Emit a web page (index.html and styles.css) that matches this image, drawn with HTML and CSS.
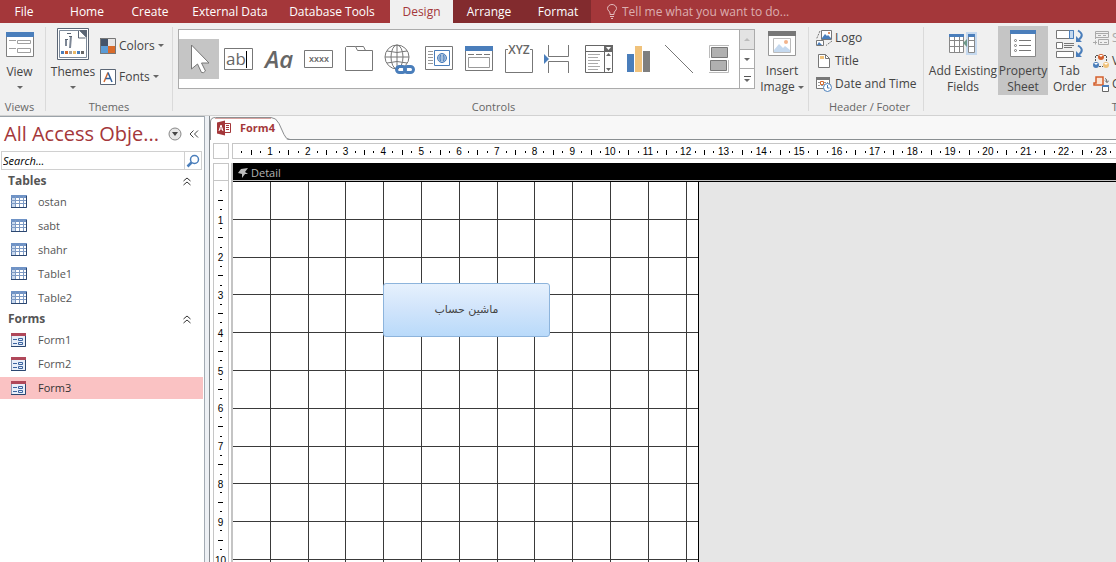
FILE: index.html
```html
<!DOCTYPE html>
<html lang="en">
<head>
  <meta charset="UTF-8" />
  <meta name="viewport" content="width=device-width, initial-scale=1.0"/>
  <title>Access - Form4</title>
  <link rel="stylesheet" href="styles.css">
</head>
<body>

  <!-- Ribbon tabs -->
  <nav class="tabs">
    <button class="tab">File</button>
    <button class="tab">Home</button>
    <button class="tab">Create</button>
    <button class="tab">External Data</button>
    <button class="tab tab-last">Database Tools</button>
    <button class="tab active">Design</button>
    <button class="tab context">Arrange</button>
    <button class="tab context">Format</button>
    <label class="tell-me">
      <svg width="12" height="16" viewBox="0 0 12 16" fill="none" stroke="#e3bdbe"><path d="M4 10.500V9C4 7.500 1.500 6.500 1.500 4.500a4.500 4 0 0 1 9 0c0 2-2.500 3-2.500 4.500v1.500zM4 12.500h4M5 14.500h2"/></svg>
      <input type="text" placeholder="Tell me what you want to do...">
    </label>
  </nav>

  <!-- Ribbon -->
  <div class="ribbon">
    <section class="group group-views">
      <div class="group-body">
        <button class="big">
          <svg width="28" height="32" viewBox="0 0 28 32"><path fill="#fff" stroke="#7f7f7f" d="M.5 4.500h27v24H.5z"/><path fill="#4a7ebb" d="M0 4h28v5H0z"/><path stroke="#a0a0a0" fill="none" d="M3 12.500h7M3 20.500h7M11.500 12.500h13v3h-13zM11.500 20.500h13v4h-13z"/></svg>
          <span>View</span>
          <i class="caret"></i>
        </button>
      </div>
      <h2>Views</h2>
    </section>

    <section class="group group-themes">
      <div class="group-body">
        <button class="big">
          <svg width="32" height="32" viewBox="0 0 32 32"><path fill="#fff" stroke="#5b6675" d="M.5.500h31v31H.5z"/><path fill="#fff" stroke="#7d8a9a" d="M2.500 2.500h20l7 7v20h-27z"/><path fill="#5b6675" d="M22 2h8v8z"/><path fill="#fff" stroke="#5b6675" d="M21.500 3v7h7"/><path stroke="#7d8796" stroke-width="2" fill="none" d="M9 12v6M14 8l-1 12"/><path stroke="#5b6675" fill="none" d="M10 5.500h4M8 11.500h3M12 8.500h3"/><path fill="#4a7ebb" d="M4 23h3v3H4z"/><path fill="#d36a30" d="M8 23h3v3H8z"/><path fill="#a0a0a0" d="M12 23h3v3h-3z"/><path fill="#eab967" d="M16 23h3v3h-3z"/><path fill="#4a7ebb" d="M20 23h3v3h-3z"/><path fill="#666" d="M24 23h3v3h-3z"/></svg>
          <span>Themes</span>
          <i class="caret"></i>
        </button>
        <div class="stack themes-stack">
          <button class="small">
            <svg width="16" height="16" viewBox="0 0 16 16"><path fill="#44546a" d="M0 0h8v8H0z"/><path fill="#e7e6e6" d="M8 0h8v8H8z"/><path fill="#5b9bd5" d="M0 8h8v8H0z"/><path fill="#d96b2b" d="M8 8h8v8H8z"/><path fill="none" stroke="#777" d="M.5.500h15v15H.5z"/></svg>
            Colors <i class="caret"></i>
          </button>
          <button class="small">
            <svg width="16" height="16" viewBox="0 0 16 16"><path fill="#fff" stroke="#5b6675" d="M.5.500h15v15H.5z"/><path fill="none" stroke="#d36a30" stroke-width="1.500" d="M4 13 8 3.500"/><path fill="none" stroke="#31609b" stroke-width="1.500" d="m8 3.500 4 9.500M5.500 9.500h5"/></svg>
            Fonts <i class="caret"></i>
          </button>
        </div>
      </div>
      <h2>Themes</h2>
    </section>

    <section class="group group-controls">
      <div class="gallery">
        <div class="gallery-items">
          <button class="selected" aria-label="Select"><svg viewBox="0 0 40 40"><path fill="#fff" stroke="#777" d="M12.500 6v24l6-5 4 8.500q2 1 4-1.500l-4-8h7.500z"/></svg></button>
          <button aria-label="Text Box"><svg viewBox="0 0 40 40"><path fill="#fff" stroke="#777" d="M5.500 9.500h28v21h-28z"/><text class="glyph-ab" x="7" y="26">ab</text><path stroke="#000" d="M27.500 12v17"/></svg></button>
          <button aria-label="Label"><svg viewBox="0 0 40 40"><text class="glyph-aa" x="6" y="29">Aa</text></svg></button>
          <button aria-label="Button"><svg viewBox="0 0 40 40"><path fill="#fff" stroke="#777" d="M5.500 11.500h28v17h-28z"/><text class="glyph-x" x="20" y="23">xxxx</text></svg></button>
          <button aria-label="Tab Control"><svg viewBox="0 0 40 40"><path fill="#fff" stroke="#777" d="M6.500 31.500v-23l1-1h9l2 4h15v20zM16.500 7.500h8l2 4"/></svg></button>
          <button aria-label="Link"><svg viewBox="0 0 40 40" fill="none" stroke="#777"><circle cx="18" cy="18" r="12"/><ellipse cx="18" cy="18" rx="6" ry="12"/><path d="M18 6v24M6 18h24M8 12q10 3 20 0M8 24q10-3 20 0"/><path stroke="#fff" stroke-width="6" d="M20 31h12"/><g stroke="#4a7ebb" stroke-width="3"><rect x="17.500" y="27.500" width="9" height="6" rx="3"/><rect x="25.500" y="27.500" width="9" height="6" rx="3"/></g></svg></button>
          <button aria-label="Web Browser"><svg viewBox="0 0 40 40" fill="none"><path fill="#fff" stroke="#777" d="M6.500 7.500h27v23h-27z"/><path stroke="#999" d="M9 12.500h5M9 15.500h5M9 18.500h5M9 21.500h5M9 24.500h5"/><g stroke="#4a7ebb"><path d="M15.500 11.500h15v15h-15z"/><circle cx="23" cy="19" r="4.500"/><ellipse cx="23" cy="19" rx="2" ry="4.500"/><path d="M18.500 19h9M19 17h8M19 21h8"/></g></svg></button>
          <button aria-label="Navigation"><svg viewBox="0 0 40 40" fill="none" stroke="#777"><path fill="#fff" d="M6.500 7.500h27v24h-27z"/><path fill="#4a7ebb" stroke="none" d="M6 7h28v5H6z"/><path d="M9 15.500h6M17 15.500h6M25 15.500h6"/><path stroke="#999" d="M9.500 18.500h21v10h-21z"/></svg></button>
          <button aria-label="Option Group"><svg viewBox="0 0 40 40"><path fill="none" stroke="#777" d="M9 10.500H6.500v23h27v-23H31"/><text class="glyph-xyz" x="20" y="15">XYZ</text></svg></button>
          <button aria-label="Page Break"><svg viewBox="0 0 40 40" fill="none" stroke="#777"><path d="M9.500 6v11.500h20V6M9.500 34V22.500h20V34"/><path fill="#4a7ebb" stroke="none" d="m5 15 5 5-5 5z"/></svg></button>
          <button aria-label="Combo Box"><svg viewBox="0 0 40 40"><path fill="#fff" stroke="#666" d="M6.500 6.500h27v27h-27zM6 12.500h28M25.500 12v22"/><path fill="#666" d="M25 6h9v6h-9z"/><path fill="#fff" d="M27 8h5l-2.500 3z"/><path fill="#666" d="M27 17h5l-2.500-3zM27 29h5l-2.500 3z"/><path stroke="#aaa" d="M9 15.500h12M9 18.500h10M9 21.500h12M9 24.500h10M9 27.500h12M9 30.500h10"/></svg></button>
          <button aria-label="Chart"><svg viewBox="0 0 40 40"><path fill="#4a7ebb" d="M8 15h7v18H8z"/><path fill="#f0c27b" d="M16 7h7v26h-7z"/><path fill="#7f7f7f" d="M24 12h7v21h-7z"/></svg></button>
          <button aria-label="Line"><svg viewBox="0 0 40 40"><path stroke="#777" d="m6 6 28 28"/></svg></button>
          <button aria-label="Toggle Button"><svg viewBox="0 0 40 40"><path fill="#b0b0b0" stroke="#777" d="M12.500 8.500h16v10h-16zM11.500 21.500h16v10h-16z"/><path fill="none" stroke="#bbb" d="M10.500 19V6.500H30M10 33.500h19.500V21"/></svg></button>
        </div>
        <div class="gallery-scroll">
          <button class="off" aria-label="Scroll up"><i class="caret up"></i></button>
          <button aria-label="Scroll down"><i class="caret"></i></button>
          <button class="more" aria-label="More"><i class="caret"></i></button>
        </div>
      </div>
      <button class="big image">
        <svg width="28" height="32" viewBox="0 0 28 32"><path fill="#fff" stroke="#999" d="M.5 4.500h27v24H.5z"/><path fill="#777" d="M0 4h28v5H0z"/><path fill="#fff" stroke="#bbb" d="M5.500 11.500h17v14h-17z"/><path fill="#c5d9ef" d="m6 23 5-6 4 4 2-2 5 4v2H6z"/><circle cx="18" cy="15" r="2" fill="#f2b48c"/></svg>
        <span>Insert<br>Image <i class="caret"></i></span>
      </button>
      <h2>Controls</h2>
    </section>

    <section class="group group-header">
      <div class="group-body">
        <div class="stack">
          <button class="small">
            <svg width="16" height="16" viewBox="0 0 16 16"><path fill="#fff" stroke="#777" d="M5.500.500h10v9h-10z"/><path fill="#4a7ebb" d="m6 8 3-4 2 2 1-1 3 3v1H6z"/><circle cx="13" cy="3" r="1" fill="#d36a30"/><path fill="none" stroke="#777" stroke-dasharray="2 1" d="M4 1 .5 9M16 11l-6 4.500"/><path fill="#fff" stroke="#777" d="M.5 10.500h7v5h-7z"/><path fill="#4a7ebb" d="m1 15 2-3 3 3z"/></svg>
            Logo
          </button>
          <button class="small">
            <svg width="16" height="16" viewBox="0 0 16 16"><path fill="#fff" stroke="#777" d="M2.500 1.500h7l4 4v9h-11z"/><path fill="none" stroke="#777" d="M9.500 1.500v4h4"/><path fill="#f0c27b" d="M4 3h4v3H4z"/></svg>
            Title
          </button>
          <button class="small">
            <svg width="16" height="16" viewBox="0 0 16 16"><path fill="#fff" stroke="#777" d="M.5 1.500h13v11H.5z"/><path fill="#777" d="M0 1h14v3H0z"/><path stroke="#999" stroke-dasharray="2 1" d="M2 6.500h10M2 9.500h10"/><path fill="#fff" stroke="#d36a30" d="M4.500 5.500h3v3h-3z"/><circle cx="11.500" cy="11.500" r="4" fill="#fff" stroke="#4a7ebb"/><path fill="none" stroke="#4a7ebb" d="M11.500 9v3h2"/></svg>
            Date and Time
          </button>
        </div>
      </div>
      <h2>Header / Footer</h2>
    </section>

    <section class="group group-tools">
      <div class="group-body">
        <button class="big fields">
          <svg width="28" height="32" viewBox="0 0 28 32"><path fill="#fff" stroke="#888" d="M.5 7.500h14v18H.5zM.5 13.500h14M.5 19.500h14M5.500 7.500v18M10.500 7.500v18"/><path fill="#4a7ebb" d="M0 7h15v3H0z"/><path fill="#c5d9ef" d="M17 5h11v23H17z"/><path fill="#fff" stroke="#888" d="M19.500 7.500h6v18h-6zM19.500 13.500h6M19.500 19.500h6"/><path fill="#4a7ebb" d="M19 7h7v3h-7z"/><path fill="#6f9a8b" d="m18 12-4 4 4 4z"/></svg>
          <span>Add Existing<br>Fields</span>
        </button>
        <button class="big sheet pressed">
          <svg width="26" height="32" viewBox="0 0 26 32"><path fill="#fff" stroke="#888" d="M.5 3.500h25v26H.5z"/><path fill="#4a7ebb" d="M0 3h26v4H0z"/><g fill="#fff" stroke="#777"><circle cx="5.500" cy="13.500" r="1"/><circle cx="5.500" cy="18.500" r="1"/><circle cx="5.500" cy="23.500" r="1"/><path d="M9 13.500h12M9 18.500h12M9 23.500h12"/></g></svg>
          <span>Property<br>Sheet</span>
        </button>
        <button class="big order">
          <svg width="28" height="32" viewBox="0 0 28 32"><path fill="#fff" stroke="#777" d="M.5 3.500h17v8H.5zM.5 15.500h6v6h-6zM.5 24.500h17v6H.5z"/><path fill="#c5d9ef" stroke="#4a7ebb" d="M13.500 3.500h4v8h-4z"/><path stroke="#777" d="M8 16.500h10M8 18.500h10M8 20.500h8"/><path fill="none" stroke="#4a7ebb" stroke-width="2" d="M22 3.500q7 4 1 9M22 18.500q7 4 1 9"/><path fill="#4a7ebb" d="M20 9v6h6zM20 24v6h6z"/></svg>
          <span>Tab<br>Order</span>
        </button>
        <div class="stack">
          <button class="small dim" disabled>
            <svg width="16" height="16" viewBox="0 0 16 16" fill="none" stroke="#aaa"><path d="M2.500 9V1.500h13v6H2M2.500 3.500h13M5 5.500h3M10 5.500h3M5.500 9.500h10v5h-10zM7 12.500h2M11 12.500h3M0 12.500h4M2.500 10.500v4"/></svg>
            Subform in New Window
          </button>
          <button class="small">
            <svg width="16" height="16" viewBox="0 0 16 16"><path fill="none" stroke="#555" stroke-dasharray="2 1" d="M5 2.500H2.500V8M11 2.500h2.500V8M6 13.500h4"/><circle cx="8" cy="4" r="3" fill="#d35f2d"/><circle cx="3" cy="12" r="3" fill="#4a7ebb"/><circle cx="13" cy="12" r="3" fill="#f0c27b"/><path fill="#fff" d="m6 2 2 2 2-2zM1 10l2 2 2-2zM11 10l2 2 2-2z"/></svg>
            View Code
          </button>
          <button class="small">
            <svg width="16" height="16" viewBox="0 0 16 16"><path fill="#fbe5d6" stroke="#d35f2d" stroke-width="1.500" d="M3 1h7v8H1V7h2z"/><path fill="#fff" stroke="#666" d="M9.500 9.500h6v6h-6z"/><path fill="#4a7ebb" d="M9 9h7v2H9z"/><path fill="none" stroke="#666" d="M12 2.500q2 0 2 4M12 4.500l2 2 2-2"/></svg>
            Convert Macros
          </button>
        </div>
      </div>
      <h2>Tools</h2>
    </section>
  </div>

  <div class="workspace">
    <!-- Navigation pane -->
    <aside class="nav-pane">
      <header class="nav-head">
        <h1>All Access Obje...</h1>
        <button aria-label="Object list"><svg width="14" height="14" viewBox="0 0 14 14"><circle cx="7" cy="7" r="6" fill="#e6e6e6" stroke="#888"/><path fill="#444" d="M4 5h6L7 9z"/></svg></button>
        <button aria-label="Collapse pane"><svg width="10" height="10" viewBox="0 0 10 10" fill="none" stroke="#444"><path d="M4.500 1.500 1 5l3.500 3.500M9 1.500 5.500 5 9 8.500"/></svg></button>
      </header>
      <div class="search">
        <input type="text" placeholder="Search..." aria-label="Search">
        <button aria-label="Go"><svg width="14" height="14" viewBox="0 0 14 14" fill="none" stroke="#4a7ebb"><circle cx="8.500" cy="5.500" r="4" stroke-width="1.500"/><path stroke-width="2.500" d="m5.500 8.500-4 4"/></svg></button>
      </div>
      <h3>Tables <svg width="8" height="9" viewBox="0 0 8 9" fill="none" stroke="#333"><path d="M.5 4 4 1l3.500 3M.5 8 4 5l3.500 3"/></svg></h3>
      <ul id="tables"></ul>
      <h3>Forms <svg width="8" height="9" viewBox="0 0 8 9" fill="none" stroke="#333"><path d="M.5 4 4 1l3.500 3M.5 8 4 5l3.500 3"/></svg></h3>
      <ul id="forms"></ul>
    </aside>
    <div class="splitter"></div>

    <!-- Form designer -->
    <main class="designer">
      <div class="doc-tabs">
        <button class="doc-tab">
          <svg class="doc-shape" width="80" height="24" viewBox="0 0 80 24"><path fill="#fff" d="M1 24V6q0-4.500 5-4.500h54q5 0 8 6l5 11q2 5 6 5.500z"/><path fill="none" stroke="#8d8f91" d="M.5 24V6q0-4.500 5-4.500H61q5 0 8 6l5 11q2 5 6 5"/><path fill="none" stroke="#d9a3a0" d="M5 2.500h56"/></svg>
          <svg width="16" height="16" viewBox="0 0 16 16"><path fill="#fff" stroke="#a4373a" d="M8 3.500h6.500v9H8M10 5.500h3M10 7.500h3M10 9.500h3"/><path fill="#a4373a" d="m1 2.500 8-2v15l-8-2z"/><path fill="none" stroke="#fff" d="m3 11 2-6 2 6M3.500 9h3"/></svg>
          <span>Form4</span>
        </button>
      </div>
      <div class="sheet-area">
        <div class="corner"></div>
        <div class="ruler ruler-x" id="rulerX"></div>
        <div class="ruler-side">
          <div class="section-box"></div>
          <div class="ruler ruler-y" id="rulerY"></div>
        </div>
        <div class="canvas">
          <div class="section-bar">
            <svg width="10" height="10" viewBox="0 0 10 10"><path fill="#bbb" d="m0 5 3-4 7-1-3 4 3 2H7l-3 4V6z"/></svg>
            Detail
          </div>
          <div class="form-grid">
            <button class="form-button" lang="fa" dir="rtl">ماشین حساب</button>
          </div>
        </div>
      </div>
    </main>
  </div>

  <script>
    const tableIcon = '<svg width="16" height="14" viewBox="0 0 16 14"><path fill="#fff" stroke="#5d7eae" d="M.5.500h15v12H.5z"/><path fill="#6f93c6" d="M0 0h16v3H0z"/><path fill="#c9d9ee" d="M1 3h3v9H1z"/><path stroke="#7d9ac4" d="M0 5.500h16M0 8.500h16M4.500 1v12M8.500 1v12M12.500 1v12"/><path fill="none" stroke="#2c4770" d="M0 12.500h15.500V1"/></svg>';
    const formIcon = '<svg width="16" height="14" viewBox="0 0 16 14"><path fill="#e8eff9" stroke="#8a9bb5" d="M.5.500h14v13H.5z"/><path fill="#b0485a" d="M0 0h15v3H0z"/><path fill="none" stroke="#3c64a0" d="M2 6.500h4M2 10.500h4M7.500 5.500h4v2h-4zM7.500 9.500h4v2h-4z"/><path fill="none" stroke="#2c4770" d="M0 13.500h14.500V3"/></svg>';

    function fillList(id, names, icon, selected) {
      document.getElementById(id).innerHTML = names
        .map(name => `<li><a href="#${name}" class="${name === selected ? 'selected' : ''}">${icon}${name}</a></li>`)
        .join('');
    }

    // One cell per centimetre, the number sits on the full mark
    function fillRuler(id, count) {
      let html = '';
      for (let n = 1; n <= count; n++) {
        html += `<div class="cm"><i class="dot"></i><i class="tick"></i><i class="dot"></i><span>${n}</span></div>`;
      }
      document.getElementById(id).innerHTML = html;
    }

    // Only as many centimetres as the window can show
    const CM = 96 / 2.54;
    fillList('tables', ['ostan', 'sabt', 'shahr', 'Table1', 'Table2'], tableIcon);
    fillList('forms', ['Form1', 'Form2', 'Form3'], formIcon, 'Form3');
    fillRuler('rulerX', Math.ceil(document.getElementById('rulerX').clientWidth / CM));
    fillRuler('rulerY', Math.ceil(document.getElementById('rulerY').clientHeight / CM));
  </script>
</body>
</html>
```
FILE: styles.css
```css
:root {
  --accent: #a4373a;
  --accent-dark: #822b2e;
  --ribbon: #f0f0f0;
  --line: #c6c6c6;
  --text: #444444;
}

* {
  box-sizing: border-box;
}

body {
  margin: 0;
  height: 100vh;
  display: flex;
  flex-direction: column;
  overflow: hidden;
  font-family: 'Open Sans', 'Noto Sans', sans-serif;
  font-size: 12px;
  line-height: 16px;
  color: var(--text);
  background: #fff;
}

button,
input {
  font: inherit;
  color: inherit;
  border: 0;
  padding: 0;
  background: none;
}

svg {
  display: block;
  flex: none;
}

h1, h2, h3, ul {
  margin: 0;
  padding: 0;
}

/* Ribbon tabs */
.tabs {
  display: grid;
  grid-template-columns: 48px 78px 48px 112px 104px 63px 72px 66px 1fr;
  flex: none;
  height: 23px;
  background: var(--accent);
  color: #fff;
}

.tab {
  white-space: nowrap;
}

.tab-last {
  padding-right: 12px;
}

.tab.active {
  background: var(--ribbon);
  color: var(--accent);
}

.tab.context {
  background: var(--accent-dark);
}

.tell-me {
  display: flex;
  align-items: center;
  gap: 4px;
  padding-left: 15px;
}

.tell-me input {
  flex: 1;
}

.tell-me input::placeholder {
  color: #dcaeb0;
  opacity: 1;
}

/* Ribbon */
.ribbon {
  display: flex;
  flex: none;
  height: 93px;
  padding: 4px 0;
  background: var(--ribbon);
  border-bottom: 1px solid #d2d2d2;
  overflow: hidden;
}

.group {
  display: flex;
  flex-direction: column;
  flex: none;
  border-right: 1px solid #dadada;
}

.group h2 {
  margin-top: auto;
  margin-bottom: -4px;
  font-size: 11px;
  font-weight: 400;
  text-align: center;
  color: #666;
}

.group-body {
  display: flex;
  align-items: flex-start;
}

.group-views {
  width: 46px;
  padding-right: 6px;
}

.group-themes {
  width: 127px;
}

.group-controls {
  display: grid;
  grid-template-columns: auto auto;
  grid-template-rows: 1fr auto;
  align-items: start;
  justify-content: start;
  width: 636px;
  padding-left: 5px;
}

.group-controls h2 {
  grid-column: span 2;
}

.group-header {
  width: 115px;
  padding-left: 7px;
}

.group-tools {
  width: 400px;
  padding-left: 4px;
}

.big {
  display: flex;
  flex-direction: column;
  align-items: center;
  width: 54px;
  padding-top: 1px;
  white-space: nowrap;
}

.big span {
  margin-top: 4px;
}

.big > .caret {
  margin-top: 6px;
}

.group-views .big {
  width: 39px;
}

.fields {
  width: 70px;
}

.sheet {
  width: 50px;
}

.order {
  width: 43px;
}

.pressed {
  background: #c5c5c5;
}

.group-tools .big,
.image {
  height: 69px;
  margin-top: -1px;
}

.caret {
  display: inline-block;
  border: 3px solid transparent;
  border-top-color: #666;
  border-bottom: 0;
  vertical-align: middle;
}

.caret.up {
  border-top: 0;
  border-bottom: 3px solid #bbb;
}

.stack {
  display: flex;
  flex-direction: column;
  margin-top: -1px;
}

.group-tools .stack {
  margin-left: 2px;
}

.small {
  display: flex;
  align-items: center;
  gap: 3px;
  height: 23px;
  white-space: nowrap;
}

.themes-stack {
  gap: 8px;
  padding-top: 8px;
}

.dim {
  color: #aaa;
}

.gallery {
  display: flex;
  height: 60px;
  margin-top: 2px;
  background: #fff;
  border: 1px solid #ababab;
}

.gallery-items {
  display: flex;
  align-items: center;
}

.gallery-items button {
  width: 40px;
  height: 40px;
}

.gallery-items .selected {
  background: #c5c5c5;
}

.gallery-items svg text {
  fill: #666;
}

.glyph-ab {
  font-size: 17px;
}

.glyph-aa {
  font-size: 24px;
  font-style: italic;
  font-weight: 600;
}

.glyph-x {
  font-size: 9px;
  font-weight: 600;
  text-anchor: middle;
}

.glyph-xyz {
  font-size: 12px;
  font-weight: 600;
  text-anchor: middle;
}

.gallery-scroll {
  display: flex;
  flex-direction: column;
  width: 15px;
  border-left: 1px solid #ababab;
}

.gallery-scroll button {
  display: flex;
  flex-direction: column;
  align-items: center;
  justify-content: center;
  gap: 2px;
  flex: 1;
}

.gallery-scroll button + button {
  border-top: 1px solid #ababab;
}

.gallery-scroll .off {
  background: #e3e3e3;
}

.more::before {
  content: "";
  width: 7px;
  height: 1px;
  background: #555;
}

/* Navigation pane */
.workspace {
  display: flex;
  flex: 1;
  min-height: 0;
}

.nav-pane {
  flex: none;
  width: 204px;
  padding-right: 1px;
  border-top: 1px solid #9ba3a9;
}

.nav-head {
  display: flex;
  align-items: center;
  height: 34px;
  padding: 0 4px;
}

.nav-head h1 {
  flex: 1;
  font-size: 20px;
  font-weight: 400;
  line-height: 34px;
  white-space: nowrap;
  color: var(--accent);
}

.nav-head button + button {
  margin-left: 7px;
}

.search {
  display: flex;
  height: 19px;
  margin: 0 1px 2px 1px;
  border: 1px solid #d0d0d0;
}

.search input {
  flex: 1;
  min-width: 0;
  padding-left: 1px;
  font-size: 11px;
  font-style: italic;
}

.search input::placeholder {
  color: #000;
  opacity: 1;
}

.search button {
  width: 17px;
  padding-left: 1px;
  border-left: 1px solid #d0d0d0;
}

.nav-pane h3 {
  display: flex;
  align-items: center;
  justify-content: space-between;
  height: 18px;
  padding: 0 12px 0 8px;
  font-size: 12px;
  font-weight: 700;
  color: #555;
}

.nav-pane ul {
  list-style: none;
}

.nav-pane li {
  padding: 1px 0;
}

.nav-pane a {
  display: flex;
  align-items: center;
  gap: 11px;
  height: 22px;
  padding-left: 11px;
  font-size: 11px;
  color: #555;
  text-decoration: none;
}

.nav-pane a.selected {
  background: #fac2c3;
  color: #333;
}

.splitter {
  flex: none;
  width: 6px;
  background: #edf0f4;
  border-left: 1px solid #a3abb3;
  border-right: 1px solid #858b90;
}

/* Form designer */
.designer {
  display: flex;
  flex-direction: column;
  flex: 1;
  min-width: 0;
}

.doc-tabs {
  flex: none;
  height: 24px;
  background: #f8f8f8;
  border-bottom: 1px solid #8a8f92;
}

.doc-tab {
  position: relative;
  z-index: 0;
  display: flex;
  align-items: center;
  gap: 8px;
  width: 80px;
  height: 24px;
  padding-left: 6px;
  font-size: 11px;
  font-weight: 700;
  color: var(--accent);
}

/* Slanted tab outline behind the caption */
.doc-shape {
  position: absolute;
  left: 0;
  top: 0;
  z-index: -1;
}

.sheet-area {
  display: grid;
  grid-template-columns: 16px 1fr;
  grid-template-rows: 16px 1fr;
  column-gap: 2px;
  row-gap: 4px;
  flex: 1;
  min-height: 0;
  padding: 3px 0 0 3px;
}

.corner,
.section-box {
  border: 1px solid var(--line);
}

.ruler {
  display: flex;
  min-width: 0;
  overflow: hidden;
  border: 1px solid var(--line);
  font: 10px/10px 'Liberation Sans', Arial, sans-serif;
  color: #000;
}

.ruler-x {
  margin-left: 1px;
  padding: 2px 0 0 4px;
  border-right: 0;
}

.ruler-y {
  flex-direction: column;
  flex: 1;
  padding: 5px 1px 0 0;
  border-top: 0;
  border-bottom: 0;
}

.ruler-side {
  display: flex;
  flex-direction: column;
  min-height: 0;
}

.section-box {
  flex: none;
  height: 18px;
}

.cm {
  display: grid;
  flex: none;
}

.cm > * {
  place-self: center;
}

.ruler-x .cm {
  width: 1cm;
  grid-template-columns: repeat(4, minmax(0, 1fr));
}

.ruler-y .cm {
  height: 1cm;
  grid-template-rows: repeat(4, minmax(0, 1fr));
}

.ruler-y span {
  margin-top: 3px;
}

.dot,
.tick {
  background: #000;
}

.ruler-x .dot {
  width: 1px;
  height: 2px;
}

.ruler-x .tick {
  width: 1px;
  height: 5px;
}

.ruler-y .dot {
  width: 2px;
  height: 1px;
}

.ruler-y .tick {
  width: 5px;
  height: 1px;
}

.canvas {
  display: flex;
  flex-direction: column;
  min-height: 0;
  overflow: hidden;
  border-left: 2px solid #c4c4c4;
  background: #e6e6e6;
}

.section-bar {
  display: flex;
  align-items: center;
  gap: 3px;
  flex: none;
  height: 19px;
  padding-left: 5px;
  font-size: 11px;
  color: #b5b5b5;
  background: linear-gradient(#000 17px, #c4c4c4 17px 18px, #000 18px);
}

.form-grid {
  position: relative;
  flex: 1;
  width: 466px;
  border-right: 1px solid #000;
  background-color: #fff;
  background-image:
    repeating-linear-gradient(to right, transparent 0 calc(1cm - 1px), #3a3a3a calc(1cm - 1px) 1cm),
    repeating-linear-gradient(to bottom, transparent 0 calc(1cm - 1px), #3a3a3a calc(1cm - 1px) 1cm);
}

/* Control placed on the form by its own coordinates */
.form-button {
  position: absolute;
  left: 150px;
  top: 101px;
  width: 167px;
  height: 54px;
  border: 1px solid #8db4dc;
  border-radius: 3px;
  background: linear-gradient(#e6f1fd, #d0e4fb 50%, #b9dafa);
  font: 11px/16px 'DejaVu Sans', sans-serif;
  color: #444;
}
```
